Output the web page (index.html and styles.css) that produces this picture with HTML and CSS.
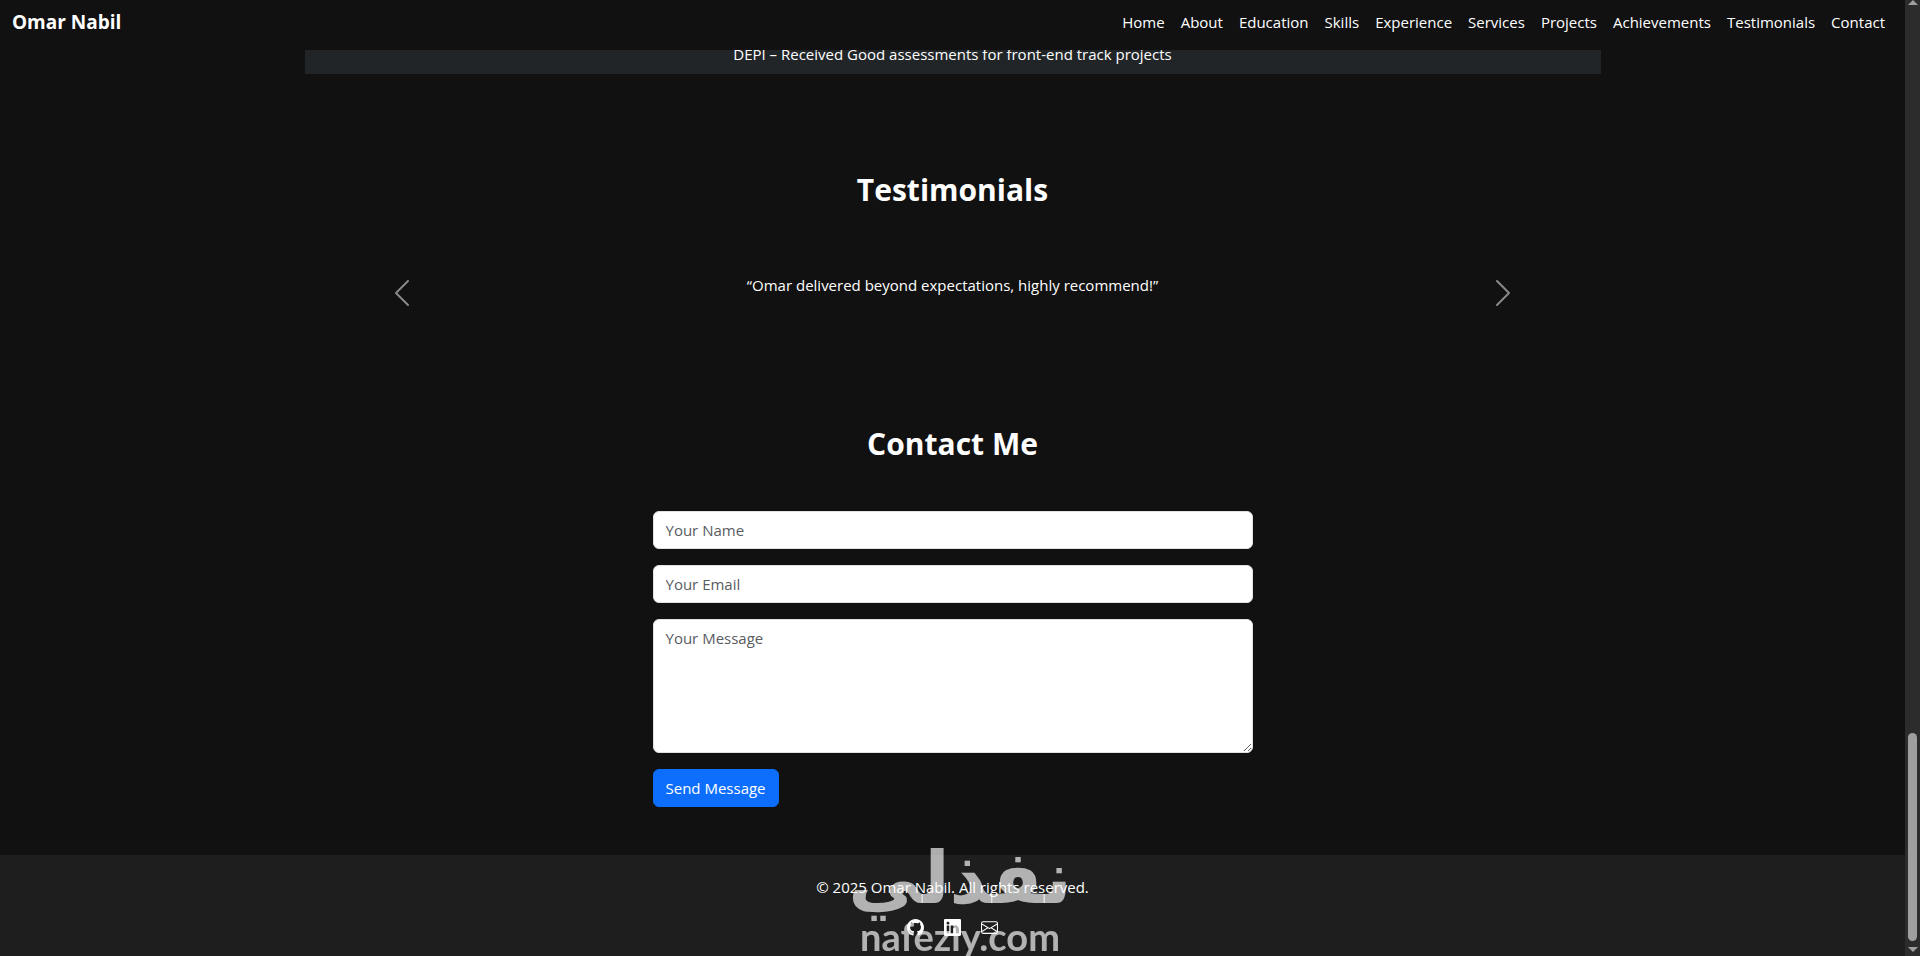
FILE: index.html
```html
<!DOCTYPE html>
<html lang="en">
<head>
  <meta charset="UTF-8" />
  <meta name="viewport" content="width=device-width, initial-scale=1.0"/>
  <title>Omar Nabil</title>
  <link rel="stylesheet" href="styles.css">
</head>
<body>
  <div class="page">
    <nav class="navbar">
      <a class="brand" href="#home">Omar Nabil</a>
      <div class="nav-links">
        <a href="#home">Home</a>
        <a href="#about">About</a>
        <a href="#education">Education</a>
        <a href="#skills">Skills</a>
        <a href="#experience">Experience</a>
        <a href="#services">Services</a>
        <a href="#projects">Projects</a>
        <a href="#achievements">Achievements</a>
        <a href="#testimonials">Testimonials</a>
        <a href="#contact">Contact</a>
      </div>
    </nav>

    <section id="achievements" class="achievements">
      <div class="container">
        <p class="achievement">DEPI – Received Good assessments for front-end track projects</p>
      </div>
    </section>

    <section id="testimonials" class="section">
      <div class="container">
        <h2>Testimonials</h2>
        <div class="carousel">
          <button class="carousel-btn" type="button" aria-label="Previous">
            <svg viewBox="0 0 16 16" fill="#fff"><path d="M11.354 1.646a.5.5 0 0 1 0 .708L5.707 8l5.647 5.646a.5.5 0 0 1-.708.708l-6-6a.5.5 0 0 1 0-.708l6-6a.5.5 0 0 1 .708 0z"/></svg>
          </button>
          <p class="quote">“Omar delivered beyond expectations, highly recommend!”</p>
          <button class="carousel-btn" type="button" aria-label="Next">
            <svg viewBox="0 0 16 16" fill="#fff"><path d="M4.646 1.646a.5.5 0 0 1 .708 0l6 6a.5.5 0 0 1 0 .708l-6 6a.5.5 0 0 1-.708-.708L10.293 8 4.646 2.354a.5.5 0 0 1 0-.708z"/></svg>
          </button>
        </div>
      </div>
    </section>

    <section id="contact" class="section">
      <div class="container">
        <h2>Contact Me</h2>
        <form class="contact-form">
          <input type="text" placeholder="Your Name" aria-label="Your Name">
          <input type="email" placeholder="Your Email" aria-label="Your Email">
          <textarea rows="5" placeholder="Your Message" aria-label="Your Message"></textarea>
          <button class="btn" type="submit">Send Message</button>
        </form>
      </div>
    </section>

    <footer class="footer">
      <p>© 2025 Omar Nabil. All rights reserved.</p>
      <div class="social">
        <a href="#github" aria-label="GitHub">
          <svg viewBox="0 0 16 16" fill="currentColor"><path d="M8 0C3.58 0 0 3.58 0 8c0 3.54 2.29 6.53 5.47 7.59.4.07.55-.17.55-.38 0-.19-.01-.82-.01-1.49-2.01.37-2.53-.49-2.69-.94-.09-.23-.48-.94-.82-1.13-.28-.15-.68-.52-.01-.53.63-.01 1.08.58 1.23.82.72 1.21 1.87.87 2.33.66.07-.52.28-.87.51-1.07-1.78-.2-3.64-.89-3.64-3.95 0-.87.31-1.59.82-2.15-.08-.2-.36-1.02.08-2.12 0 0 .67-.21 2.2.82.64-.18 1.32-.27 2-.27s1.36.09 2 .27c1.53-1.04 2.2-.82 2.2-.82.44 1.1.16 1.92.08 2.12.51.56.82 1.27.82 2.15 0 3.07-1.87 3.75-3.65 3.95.29.25.54.73.54 1.48 0 1.07-.01 1.93-.01 2.2 0 .21.15.46.55.38A8.01 8.01 0 0 0 16 8c0-4.42-3.58-8-8-8"/></svg>
        </a>
        <a href="#linkedin" aria-label="LinkedIn">
          <svg viewBox="0 0 16 16" fill="currentColor"><path d="M0 1.146C0 .513.526 0 1.175 0h13.65C15.474 0 16 .513 16 1.146v13.708c0 .633-.526 1.146-1.175 1.146H1.175C.526 16 0 15.487 0 14.854zm4.943 12.248V6.169H2.542v7.225zm-1.2-8.212c.837 0 1.358-.554 1.358-1.248-.015-.709-.52-1.248-1.342-1.248S2.4 3.226 2.4 3.934c0 .694.521 1.248 1.327 1.248zm4.908 8.212V9.359c0-.216.016-.432.08-.586.173-.431.568-.878 1.232-.878.869 0 1.216.662 1.216 1.634v3.865h2.401V9.25c0-2.22-1.184-3.252-2.764-3.252-1.274 0-1.845.7-2.165 1.193v.025h-.016l.016-.025V6.169h-2.4c.03.678 0 7.225 0 7.225z"/></svg>
        </a>
        <a href="#email" aria-label="Email">
          <svg viewBox="0 0 16 16" fill="currentColor"><path d="M0 4a2 2 0 0 1 2-2h12a2 2 0 0 1 2 2v8a2 2 0 0 1-2 2H2a2 2 0 0 1-2-2zm2-1a1 1 0 0 0-1 1v.217l7 4.2 7-4.2V4a1 1 0 0 0-1-1zm13 2.383-4.708 2.825L15 11.105zm-.034 6.876-5.64-3.471L8 9.583l-1.326-.795-5.64 3.47A1 1 0 0 0 2 13h12a1 1 0 0 0 .966-.741M1 11.105l4.708-2.897L1 5.383z"/></svg>
        </a>
      </div>
    </footer>
  </div>

  <div class="scrollbar">
    <span class="arrow-up"></span>
    <span class="track-space"></span>
    <span class="thumb"></span>
    <span class="arrow-down"></span>
  </div>

  <div class="watermark">
    <span class="watermark-ar" lang="ar" dir="rtl">نفذلي</span>
    <span class="watermark-en">nafezly.com</span>
  </div>
</body>
</html>
```

FILE: styles.css
```css
* {
  box-sizing: border-box;
}
body {
  margin: 0;
  min-height: 100vh;
  display: grid;
  grid-template-columns: 1fr 15px;
  position: relative;
  overflow: hidden;
  background-color: #111;
  color: #fff;
  font-family: "Segoe UI", "Open Sans", sans-serif;
  font-size: 15px;
  line-height: 24px;
}
a {
  color: #fff;
  text-decoration: none;
}
p, h2 {
  margin: 0;
}
.page {
  display: flex;
  flex-direction: column;
}
.container {
  width: 100%;
  max-width: 1320px;
  margin: 0 auto;
  padding: 0 12px;
}

/* Navbar */
.navbar {
  position: sticky;
  top: 0;
  z-index: 10;
  display: flex;
  justify-content: space-between;
  align-items: center;
  height: 50px;
  padding: 0 20px 6px 12px;
  background-color: #111;
}
.brand {
  font-size: 19px;
  font-weight: 700;
}
.nav-links {
  display: flex;
  gap: 16px;
}

/* Achievements */
.achievements {
  margin-top: -8px;
  padding-bottom: 49px;
}
.achievement {
  padding: 0 16px 8px;
  background-color: #212528;
  text-align: center;
}

/* Sections */
.section {
  padding: 48px 0;
}
h2 {
  margin-bottom: 48px;
  font-size: 30px;
  font-weight: 700;
  line-height: 38px;
  text-align: center;
}

/* Carousel */
.carousel {
  display: grid;
  grid-template-columns: 15% 1fr 15%;
}
.carousel-btn {
  display: flex;
  justify-content: center;
  align-items: center;
  padding: 0;
  border: 0;
  background: none;
  opacity: 0.5;
}
.carousel-btn svg {
  width: 32px;
  height: 32px;
}
.quote {
  padding: 16px 0 32px;
  text-align: center;
}

/* Contact form */
.contact-form {
  display: flex;
  flex-direction: column;
  align-items: flex-start;
  gap: 16px;
  max-width: 600px;
  margin: 0 auto;
}
.contact-form input,
.contact-form textarea {
  display: block;
  width: 100%;
  padding: 6px 12px;
  border: 1px solid #dee2e6;
  border-radius: 6px;
  background-color: #fff;
  color: #212529;
  font: inherit;
}
.contact-form textarea {
  resize: vertical;
}
::placeholder {
  color: #595c5f;
  opacity: 1;
}
.btn {
  padding: 6px 12px;
  border: 1px solid #0d6efd;
  border-radius: 6px;
  background-color: #0d6efd;
  color: #fff;
  font: inherit;
}

/* Footer */
.footer {
  flex: 1;
  padding: 20px 0 16px;
  background-color: #1e1e1e;
  text-align: center;
}
.social {
  display: flex;
  justify-content: center;
  gap: 20px;
  margin-top: 16px;
}
.social a {
  display: flex;
  align-items: center;
  height: 24px;
}
.social svg {
  width: 17px;
  height: 17px;
}

/* Scrollbar */
.scrollbar {
  display: flex;
  flex-direction: column;
  align-items: center;
  padding-bottom: 4px;
  background-color: #2c2c2c;
}
.arrow-up,
.arrow-down {
  border: 5px solid transparent;
}
.arrow-up {
  border-top: 0;
  border-bottom-color: #9f9f9f;
}
.arrow-down {
  margin-top: 6px;
  border-bottom: 0;
  border-top-color: #9f9f9f;
}
.track-space {
  flex: 728;
}
.thumb {
  flex: 208;
  width: 9px;
  border-radius: 5px;
  background-color: #9f9f9f;
}

/* Watermark */
.watermark {
  position: absolute;
  right: 0;
  bottom: 0;
  left: 0;
  z-index: 20;
  display: flex;
  flex-direction: column;
  align-items: center;
  color: rgba(255, 255, 255, 0.66);
  font-weight: 700;
  pointer-events: none;
}
.watermark-ar {
  font-family: "DejaVu Sans", sans-serif;
  font-size: 73px;
  line-height: 76px;
}
.watermark-en {
  font-family: Lato, sans-serif;
  font-size: 38px;
  line-height: 40px;
}
```
